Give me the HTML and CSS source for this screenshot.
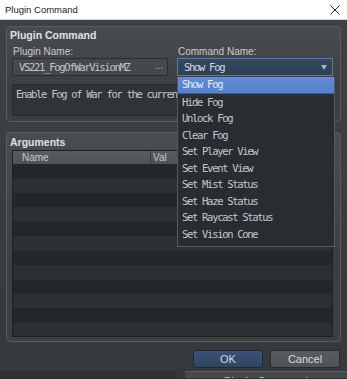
FILE: index.html
```html
<!DOCTYPE html>
<html lang="en">
<head>
    <meta charset="UTF-8">
    <meta name="viewport" content="width=device-width, initial-scale=1.0">
    <title>Plugin Command</title>
    <link rel="stylesheet" href="styles.css">
</head>
<body>
    <div class="titlebar">
        <span class="titlebar-text">Plugin Command</span>
        <svg class="close" width="10" height="10" viewBox="0 0 10 10">
            <path d="M0.5 0.5 L9.5 9.5 M9.5 0.5 L0.5 9.5" stroke="#222" stroke-width="1" fill="none"/>
        </svg>
    </div>

    <div class="dialog">
        <div class="group group-command">
            <div class="group-title">Plugin Command</div>
            <div class="fields">
                <div class="field">
                    <div class="label">Plugin Name:</div>
                    <div class="input">
                        <span class="mono">VS221_FogOfWarVisionMZ</span>
                        <span class="dots">...</span>
                    </div>
                </div>
                <div class="field field-command">
                    <div class="label">Command Name:</div>
                    <div class="select">
                        <span class="mono">Show Fog</span>
                        <span class="arrow"></span>
                    </div>
                    <ul class="dropdown mono">
                        <li class="selected">Show Fog</li>
                        <li>Hide Fog</li>
                        <li>Unlock Fog</li>
                        <li>Clear Fog</li>
                        <li>Set Player View</li>
                        <li>Set Event View</li>
                        <li>Set Mist Status</li>
                        <li>Set Haze Status</li>
                        <li>Set Raycast Status</li>
                        <li>Set Vision Cone</li>
                    </ul>
                </div>
            </div>
            <!-- the rest of the description sits under the open list -->
            <div class="description mono">Enable Fog of War for the curren</div>
        </div>

        <div class="group group-args">
            <div class="group-title">Arguments</div>
            <div class="table">
                <div class="table-head">
                    <div class="col-name">Name</div>
                    <div class="col-value">Val</div>
                </div>
                <div class="table-body"></div>
            </div>
        </div>

        <div class="buttons">
            <button class="btn btn-ok">OK</button>
            <button class="btn">Cancel</button>
        </div>
    </div>

    <div class="parent">
        <div class="parent-panel">
            <div class="parent-button">Plugin Command</div>
        </div>
    </div>
</body>
</html>
```

FILE: styles.css
```css
body {
    margin: 0;
    width: 347px;
    height: 379px;
    overflow: hidden;
    background-color: #2e3134;
    font-family: "Liberation Sans", Arial, sans-serif;
    font-size: 10px;
    color: #c9cdd0;
}

.mono {
    font-family: "DejaVu Sans Mono", monospace;
    font-size: 10.5px;
    letter-spacing: -1.3px;
}

.titlebar {
    height: 20px;
    background-color: #ffffff;
    display: flex;
    align-items: center;
    justify-content: space-between;
    padding: 0 7px 0 5px;
    border-bottom: 1px solid #d8d8d8;
    box-sizing: border-box;
}
.titlebar-text {
    color: #1a1a1a;
    font-size: 9.5px;
}

.dialog {
    background: linear-gradient(#3f4245, #36393c);
    padding: 6px 6px 3px 6px;
}

.group {
    border: 1px solid #5a5d60;
    border-radius: 4px;
    padding: 2px 7px 4px 5px;
    background: linear-gradient(#4a4d50, #3d4043 60%);
}
.group-title {
    font-weight: bold;
    font-size: 10.5px;
    line-height: 13px;
    color: #dfe2e5;
    margin-left: -2px;
}

.group-command {
    height: 96px;
    box-sizing: border-box;
}
.fields {
    display: flex;
    gap: 9px;
    margin-top: 3px;
}
.field {
    width: 156px;
    position: relative;
}
.label {
    line-height: 13px;
    padding-left: 1px;
}
.input {
    height: 18px;
    box-sizing: border-box;
    border: 1px solid #2a2d30;
    border-radius: 2px;
    background-color: #46494c;
    display: flex;
    align-items: center;
    justify-content: space-between;
    padding: 0 4px 0 6px;
    color: #c2c6c9;
}
.dots {
    color: #b0b4b8;
    font-size: 10px;
    letter-spacing: 0;
    line-height: 10px;
    padding-bottom: 3px;
}
.select {
    height: 18px;
    box-sizing: border-box;
    border: 1px solid #587b9e;
    background: linear-gradient(#33495f, #2b3f55);
    display: flex;
    align-items: center;
    justify-content: space-between;
    padding: 0 5px 0 6px;
    color: #d3d9df;
}
.arrow {
    width: 0;
    height: 0;
    border-left: 3px solid transparent;
    border-right: 3px solid transparent;
    border-top: 5px solid #a9b2bc;
}
.dropdown {
    position: absolute;
    top: 32px;
    left: 0;
    width: 158px;
    box-sizing: border-box;
    margin: 0;
    padding: 0 0 4px 0;
    list-style: none;
    background-color: #292c30;
    border: 1px solid #575a5d;
    border-top: none;
    color: #c4c8cc;
    z-index: 2;
}
.dropdown li {
    height: 16.5px;
    line-height: 16.5px;
    padding-left: 4px;
}
.dropdown .selected {
    background: linear-gradient(#618ed8, #5580c8);
    color: #e4eaf2;
    border-bottom: 1px solid #3d5f99;
    height: 15.5px;
    line-height: 15.5px;
}

.description {
    margin-top: 8px;
    height: 32px;
    box-sizing: border-box;
    border: 1px solid #27292c;
    border-radius: 2px;
    background-color: #313437;
    padding: 3px 0 0 3px;
    white-space: nowrap;
    color: #c4c8cb;
}

.group-args {
    margin-top: 10px;
    height: 210px;
    box-sizing: border-box;
}
.group-args .group-title {
    line-height: 14px;
}
.table {
    margin-top: 1px;
    height: 187px;
    box-sizing: border-box;
    border: 1px solid #1d1f21;
    display: flex;
    flex-direction: column;
    overflow: hidden;
}
.table-head {
    height: 13px;
    display: flex;
    background: linear-gradient(#5a5d60, #505356);
    color: #c4c8cc;
    line-height: 13px;
}
.col-name {
    width: 138px;
    padding-left: 9px;
    box-sizing: border-box;
    border-right: 1px solid #3a3d40;
}
.col-value {
    padding-left: 2px;
}
.table-body {
    flex: 1;
    background: repeating-linear-gradient(#24272a 0, #24272a 14.45px, #2c2f33 14.45px, #2c2f33 28.9px);
}

.buttons {
    display: flex;
    justify-content: flex-end;
    gap: 7px;
    margin-top: 8px;
    padding-right: 1px;
}
.btn {
    width: 70px;
    height: 18px;
    padding: 0;
    border: 1px solid #2a2c2e;
    border-radius: 2px;
    background: linear-gradient(#5a5d60, #505356);
    color: #d5d9dd;
    font-family: "Liberation Sans", Arial, sans-serif;
    font-size: 11px;
    line-height: 16px;
}
.btn-ok {
    border-color: #1d2838;
    background: linear-gradient(#3a5276, #30455f);
}

.parent {
    height: 7px;
    overflow: hidden;
    background-color: #2e3134;
}
.parent-panel {
    margin-left: 177px;
    height: 7px;
    border-left: 1px solid #45484b;
    padding-left: 7px;
    background-color: #33363a;
}
.parent-button {
    height: 7px;
    background-color: #45484b;
    border-top: 1px solid #5a5d60;
    text-align: center;
    font-size: 11px;
    line-height: 18px;
    color: #c9cdd0;
    overflow: hidden;
}
```
